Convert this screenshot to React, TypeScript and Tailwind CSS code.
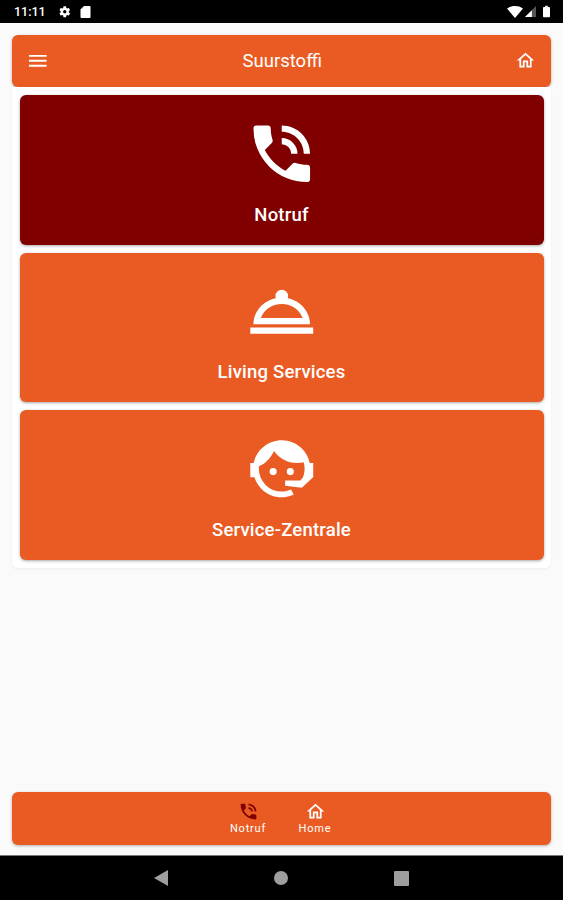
import type { ReactNode } from "react";

const PHONE =
  "M15,12H17A5,5 0 0,0 12,7V9A3,3 0 0,1 15,12M19,12H21C21,7 16.97,3 12,3V5C15.86,5 19,8.13 19,12M20,15.5C18.75,15.5 17.55,15.3 16.43,14.93C16.08,14.82 15.69,14.9 15.41,15.18L13.21,17.38C10.38,15.94 8.06,13.62 6.62,10.79L8.82,8.59C9.1,8.31 9.18,7.92 9.07,7.57C8.7,6.45 8.5,5.25 8.5,4A1,1 0 0,0 7.5,3H4A1,1 0 0,0 3,4A17,17 0 0,0 20,21A1,1 0 0,0 21,20V16.5A1,1 0 0,0 20,15.5Z";
const CLOCHE =
  "M12,5A2,2 0 0,1 14,7C14,7.24 13.96,7.47 13.88,7.69C17.95,8.5 21,11.91 21,16H3C3,11.91 6.05,8.5 10.12,7.69C10.04,7.47 10,7.24 10,7A2,2 0 0,1 12,5M22,19H2V17H22V19M12,9.5C8.89,9.5 6.25,11.39 5.34,14H18.66C17.75,11.39 15.11,9.5 12,9.5Z";
const AGENT =
  "M18.72,14.76C19.07,13.91 19.26,13 19.26,12C19.26,11.28 19.15,10.59 18.96,9.95C18.31,10.1 17.63,10.18 16.92,10.18C13.86,10.18 11.15,8.67 9.5,6.34C8.61,8.5 6.91,10.26 4.77,11.22C4.73,11.47 4.73,11.74 4.73,12A7.27,7.27 0 0,0 12,19.27C13.05,19.27 14.06,19.04 14.97,18.63C15.54,19.72 15.8,20.26 15.78,20.26C14.14,20.81 12.87,21.08 12,21.08C9.58,21.08 7.27,20.13 5.57,18.42C4.53,17.38 3.76,16.11 3.33,14.73H2V10.18H3.09C3.93,6.04 7.6,2.92 12,2.92C14.4,2.92 16.71,3.87 18.42,5.58C19.69,6.84 20.54,8.45 20.89,10.18H22V14.73H21.94L18.38,18L13.08,17.4V15.73H17.91L18.72,14.76M9.27,11.77A1.135,1.135 0 1,1 9.27,14.04A1.135,1.135 0 1,1 9.27,11.77M14.72,11.77A1.135,1.135 0 1,1 14.72,14.04A1.135,1.135 0 1,1 14.72,11.77Z";
const HOME =
  "M12 5.69L17 10.19V18H15V12H9V18H7V10.19L12 5.69M12 3L2 12H5V20H11V14H13V20H19V12H22L12 3Z";
const MENU = "M3,6H21V8H3V6M3,11H21V13H3V11M3,16H21V18H3V16Z";
const COG =
  "M19.14 12.94c.04-.3.06-.61.06-.94 0-.32-.02-.64-.07-.94l2.03-1.58a.49.49 0 0 0 .12-.61l-1.92-3.32a.49.49 0 0 0-.59-.22l-2.39.96c-.5-.38-1.03-.7-1.62-.94l-.36-2.54a.48.48 0 0 0-.48-.41h-3.84c-.24 0-.43.17-.47.41l-.36 2.54c-.59.24-1.13.57-1.62.94l-2.39-.96a.48.48 0 0 0-.59.22L2.74 8.87a.47.47 0 0 0 .12.61l2.03 1.58c-.05.3-.09.63-.09.94s.02.64.07.94l-2.03 1.58a.49.49 0 0 0-.12.61l1.92 3.32c.12.22.37.29.59.22l2.39-.96c.5.38 1.03.7 1.62.94l.36 2.54c.05.24.24.41.48.41h3.84c.24 0 .44-.17.47-.41l.36-2.54c.59-.24 1.13-.56 1.62-.94l2.39.96c.22.08.47 0 .59-.22l1.92-3.32a.47.47 0 0 0-.12-.61l-2.01-1.58zM12 15a3 3 0 1 1 0-6 3 3 0 0 1 0 6z";

function Icon({ path, className }: { path: string; className: string }) {
  return (
    <svg viewBox="0 0 24 24" fill="currentColor" className={className} aria-hidden="true">
      <path d={path} />
    </svg>
  );
}

function StatusBar() {
  return (
    <div className="flex h-[23px] shrink-0 items-center bg-black pl-[14px] pr-[13px] text-white">
      <span className="w-[44px] pt-[2px] text-[12.5px] font-medium leading-none">11:11</span>
      <Icon path={COG} className="size-[13.5px]" />
      <svg viewBox="0 0 10 12" fill="currentColor" className="ml-2 h-3 w-[11px]">
        <path d="M3.5 0H9a1 1 0 0 1 1 1v10a1 1 0 0 1-1 1H1a1 1 0 0 1-1-1V3.5z" />
      </svg>
      <svg viewBox="0 0 16 12" fill="currentColor" className="ml-auto h-3 w-4">
        <path d="M8 12 0 2.5C4.500-.8 11.500-.8 16 2.500z" />
      </svg>
      <svg viewBox="0 0 12 12" className="ml-0.5 h-[11px] w-[11px]">
        <path d="M12 0v12H0z" fill="#555" />
        <path d="M7.500 4.500V12H0z" fill="#fff" />
      </svg>
      <svg viewBox="0 0 8 13" fill="currentColor" className="ml-[7px] h-[13px] w-[7px]">
        <path d="M2.500 0h3v1.300H7a1 1 0 0 1 1 1V12a1 1 0 0 1-1 1H1a1 1 0 0 1-1-1V2.300a1 1 0 0 1 1-1h1.500z" />
      </svg>
    </div>
  );
}

interface TileProps {
  icon: string;
  label: ReactNode;
  className: string;
}

function Tile({ icon, label, className }: TileProps) {
  return (
    <button
      type="button"
      className={`flex h-[149.500px] w-full flex-col items-center rounded-md pt-[21px] text-white shadow-[0_1px_3px_rgba(0,0,0,0.35)] ${className}`}
    >
      <Icon path={icon} className="size-[75.500px] shrink-0" />
      <span className="mt-[11px] text-[18.500px] font-medium leading-6 tracking-[0.2px]">{label}</span>
    </button>
  );
}

export default function App() {
  return (
    <div className="flex h-[900px] w-[563px] flex-col overflow-hidden bg-[#fafafa] font-[Roboto,sans-serif]">
      <StatusBar />

      <main className="flex flex-1 flex-col px-3 pb-[10.500px] pt-[11.500px]">
        <header className="flex h-[52.500px] items-center justify-between rounded-md bg-[#ea5b23] pl-3.5 pr-[15px] text-white shadow-[0_1px_3px_rgba(0,0,0,0.3)]">
          <Icon path={MENU} className="size-[23.500px]" />
          <h1 className="text-[18.500px] leading-6">Suurstoffi</h1>
          <Icon path={HOME} className="size-[21px]" />
        </header>

        <section className="flex flex-col gap-2 rounded-b-md bg-white px-[7.500px] pb-2 pt-2 shadow-[0_1px_3px_rgba(0,0,0,0.06)]">
          <Tile icon={PHONE} label="Notruf" className="bg-[#800000]" />
          <Tile icon={CLOCHE} label="Living Services" className="bg-[#ea5b23]" />
          <Tile icon={AGENT} label="Service-Zentrale" className="bg-[#ea5b23]" />
        </section>

        <footer className="mt-auto flex h-[52.500px] justify-center rounded-md bg-[#ea5b23] text-white shadow-[0_1px_3px_rgba(0,0,0,0.3)]">
          <button type="button" className="flex w-[67px] flex-col items-center pt-[9px]">
            <Icon path={PHONE} className="size-[21px] text-[#800000]" />
            <span className="text-[11px] leading-[14px] tracking-[0.8px]">Notruf</span>
          </button>
          <button type="button" className="flex w-[67px] flex-col items-center pt-[9px]">
            <Icon path={HOME} className="size-[21px]" />
            <span className="text-[11px] leading-[14px] tracking-[0.8px]">Home</span>
          </button>
        </footer>
      </main>

      <nav className="flex h-[45px] shrink-0 items-center justify-center gap-[106px] border-t border-[#777] bg-black text-[#9e9e9e]">
        <svg viewBox="0 0 14 16" fill="currentColor" className="h-4 w-3.5">
          <path d="M14 0v16L0 8z" />
        </svg>
        <span className="size-3.5 rounded-full bg-current" />
        <span className="size-[15px] rounded-[1px] bg-current" />
      </nav>
    </div>
  );
}
